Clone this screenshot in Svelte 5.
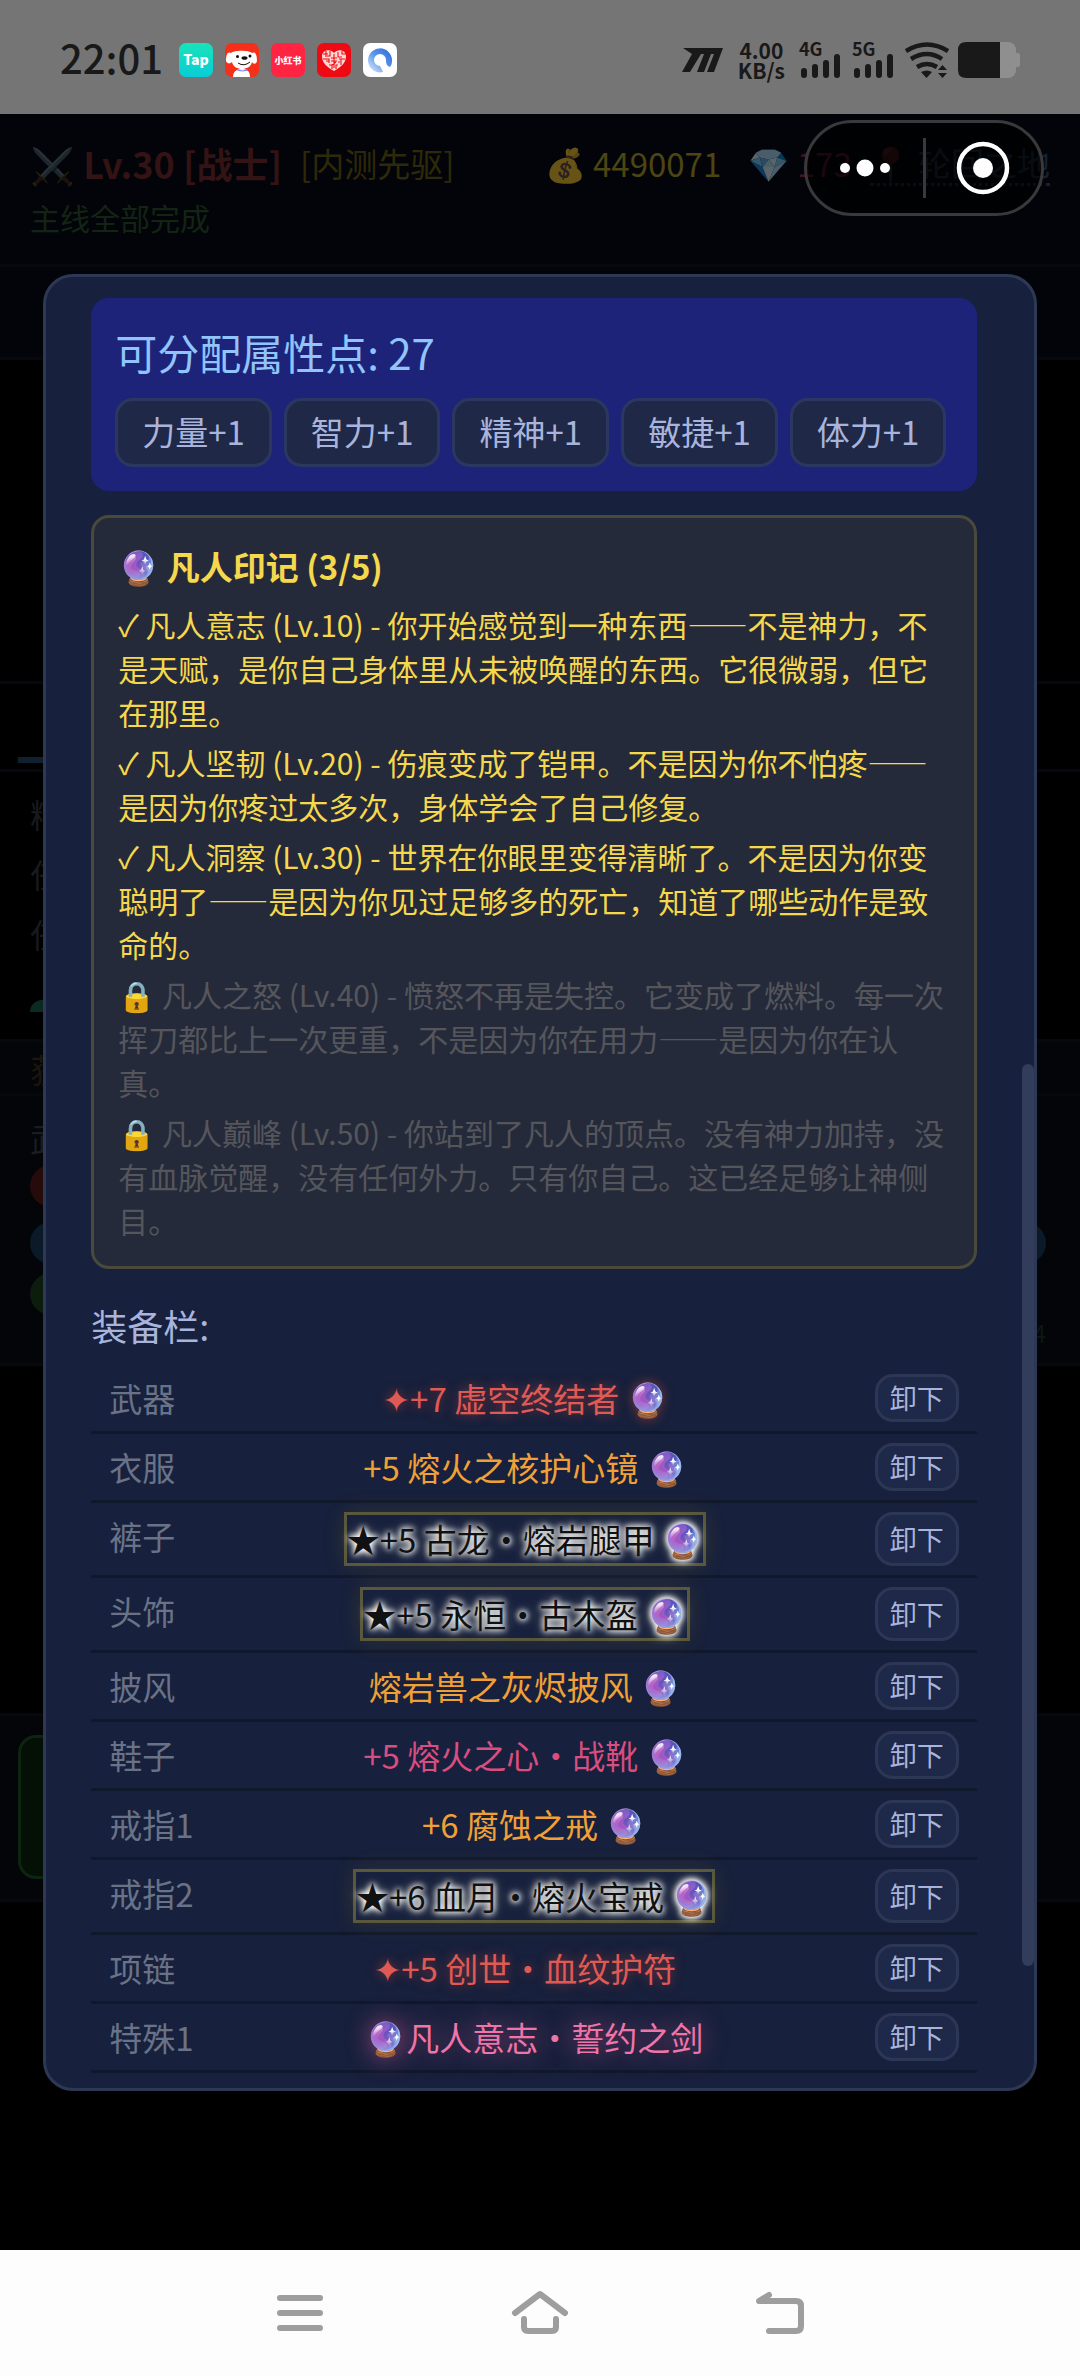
<script>
  const apps = ["tap", "jd", "xhs", "heart", "ring"];

  const attributes = ["力量", "智力", "精神", "敏捷", "体力"];

  const marks = [
    {name: "凡人意志", level: 10, open: true, text: "你开始感觉到一种东西——不是神力，不是天赋，是你自己身体里从未被唤醒的东西。它很微弱，但它在那里。"},
    {name: "凡人坚韧", level: 20, open: true, text: "伤痕变成了铠甲。不是因为你不怕疼——是因为你疼过太多次，身体学会了自己修复。"},
    {name: "凡人洞察", level: 30, open: true, text: "世界在你眼里变得清晰了。不是因为你变聪明了——是因为你见过足够多的死亡，知道了哪些动作是致命的。"},
    {name: "凡人之怒", level: 40, open: false, text: "愤怒不再是失控。它变成了燃料。每一次挥刀都比上一次更重，不是因为你在用力——是因为你在认真。"},
    {name: "凡人巅峰", level: 50, open: false, text: "你站到了凡人的顶点。没有神力加持，没有血脉觉醒，没有任何外力。只有你自己。这已经足够让神侧目。"},
  ];

  const gear = [
    {slot: "武器", item: "✦+7 虚空终结者 🔮", rank: "red"},
    {slot: "衣服", item: "+5 熔火之核护心镜 🔮", rank: "orange"},
    {slot: "裤子", item: "★+5 古龙・熔岩腿甲 🔮", rank: "star"},
    {slot: "头饰", item: "★+5 永恒・古木盔 🔮", rank: "star"},
    {slot: "披风", item: "熔岩兽之灰烬披风 🔮", rank: "orange"},
    {slot: "鞋子", item: "+5 熔火之心・战靴 🔮", rank: "pink"},
    {slot: "戒指1", item: "+6 腐蚀之戒 🔮", rank: "orange"},
    {slot: "戒指2", item: "★+6 血月・熔火宝戒 🔮", rank: "star"},
    {slot: "项链", item: "✦+5 创世・血纹护符", rank: "red"},
    {slot: "特殊1", item: "🔮凡人意志・誓约之剑", rank: "rose"},
  ];

  let points = $state(27);

  function spend() {
    if (points > 0) points -= 1;
  }
</script>

<div class="screen" lang="zh-CN">
  <header class="status">
    <span class="clock">22:01</span>
    {#each apps as app}
      <svg class="app" viewBox="0 0 34 34">
        {#if app === "tap"}
          <defs>
            <linearGradient id="tap" x1="0" y1="0" x2="0" y2="1">
              <stop offset="0" stop-color="#18e3b8" />
              <stop offset="1" stop-color="#08cdd8" />
            </linearGradient>
          </defs>
          <rect width="34" height="34" rx="7" fill="url(#tap)" />
          <text x="17" y="22" text-anchor="middle" font-size="14" font-weight="900" fill="#fff">Tap</text>
        {:else if app === "jd"}
          <rect width="34" height="34" rx="7" fill="#f5301a" />
          <path d="M8 34c0-5 3-8 9-8s8 3 8 8z" fill="#fff" />
          <path d="M6 10c3-3 18-3 21 0 3-2 5 1 5 8-1 4-4 3-5 1-1 5-6 7-10 7s-9-2-10-7c-2 2-5 2-6-1 0-7 2-10 5-8z" fill="#fff" />
          <ellipse cx="19.500" cy="15" rx="3" ry="1.800" fill="#111" />
          <circle cx="12.500" cy="13.500" r="1.500" fill="#111" />
          <circle cx="25" cy="13" r="1.500" fill="#111" />
          <path d="M13 20q6 4 12-1" fill="none" stroke="#111" />
          <path d="M12 27q6 2 11 0" fill="none" stroke="#6a7cff" />
        {:else if app === "xhs"}
          <rect width="34" height="34" rx="7" fill="#ff2442" />
          <text x="17" y="21" text-anchor="middle" font-size="9" font-weight="900" fill="#fff">小红书</text>
        {:else if app === "heart"}
          <rect width="34" height="34" rx="7" fill="#ee0a12" />
          <path d="M17 28C10 24 5 20 5 13c0-6 8-8 12-3 4-5 12-3 12 3 0 7-5 11-12 15z" fill="#ffd9d6" />
          <path d="M6 11h5M9 8v6M13 8v5h-3M6 16h6v4M9 18h3M14 15h6M17 11v14M14 18h6M15 22l4-3M21 9v5h4M25 8v3h4M22 16h6M24 16v6M21 19h2M12 22h3v4M21 22h-2v4" fill="none" stroke="#ee0a12" stroke-width="1.100" />
        {:else}
          <defs>
            <linearGradient id="ring" x1="0" y1="1" x2="1" y2="0">
              <stop offset="0" stop-color="#e8f2ff" />
              <stop offset=".5" stop-color="#5b95ea" />
              <stop offset="1" stop-color="#2c66dc" />
            </linearGradient>
          </defs>
          <rect width="34" height="34" rx="7" fill="#fff" />
          <path d="M20 29A12 12 0 1 1 29 18c0 3-1 5-2 6-3-1-4-3-4-7a6 6 0 1 0-6 6z" fill="url(#ring)" />
        {/if}
      </svg>
    {/each}
    <div class="signals">
      <svg width="42" height="36" viewBox="0 0 42 36">
        <path d="M1 6h40l-9 24h-7l7-18h-3l-7 18h-7l7-18h-3L8 30H0l10-18z" fill="#191919" />
      </svg>
      <span class="speed">4.00<br />KB/s</span>
      {#each ["4G", "5G"] as net}
        <svg class="net" width="44" height="36" viewBox="0 0 44 36">
          <text x="0" y="14" font-size="18" font-weight="700" fill="#191919">{net}</text>
          <path d="M5 29v4M16 25v8M27 21v12M38 15v18" stroke="#191919" stroke-width="6" stroke-linecap="round" />
        </svg>
      {/each}
      <svg width="44" height="36" viewBox="0 0 44 36">
        <g fill="none" stroke="#191919" stroke-width="4.500">
          <path d="M1 9q21-13 42 0" />
          <path d="M6 17q16-10 31 0" />
          <path d="M12 25q10-6 20 0" />
        </g>
        <path d="M16 30q6-3 11 0l-5.500 6zM33 28l4.500-5 4.500 5zM33 31h9l-4.500 5z" fill="#191919" />
      </svg>
      <svg width="62" height="36" viewBox="0 0 62 36">
        <rect width="58" height="36" rx="8" fill="#8f8f8f" />
        <path d="M58 11h2q2 0 2 2v10q0 2-2 2h-2z" fill="#8f8f8f" />
        <path d="M8 0h34v36H8q-8 0-8-8V8q0-8 8-8z" fill="#191919" />
      </svg>
    </div>
  </header>

  <main class="stage">
    <div class="game">
      <section class="hero">
        <div class="row">
          <strong><span class="faint">⚔️</span> Lv.30 [战士]</strong>
          <span class="title">[内测先驱]</span>
          <span class="gold"><span class="dim">💰</span> 4490071</span>
          <span class="gem"><span class="dim">💎</span> <i>173</i></span>
          <a class="place" href="#place"><span class="faint">📍</span> 轮回之地</a>
        </div>
        <p>主线全部完成</p>
      </section>
      <section class="strip"></section>
      <section class="blank"></section>
      <section class="tabs"><span></span></section>
      <section class="log">
        <p>精</p>
        <p>任</p>
        <p>任</p>
        <p class="leaf"></p>
      </section>
      <section class="loot">获</section>
      <section class="party">
        <p>武</p>
        <span class="pill hp"></span>
        <span class="pill mp"></span>
        <span class="pill xp"></span>
        <small>4</small>
      </section>
      <section class="blank low"></section>
      <section class="actions"><span class="go"></span></section>
    </div>

    <div class="overlay">
      <div class="modal">
        <section class="points">
          <h2>可分配属性点: {points}</h2>
          <div class="adds">
            {#each attributes as name}
              <button onclick={spend}>{name}+1</button>
            {/each}
          </div>
        </section>

        <section class="marks">
          <h3>🔮 凡人印记 (3/5)</h3>
          {#each marks as mark}
            <p class:locked={!mark.open}>{mark.open ? "✓" : "🔒"} {mark.name} (Lv.{mark.level}) - {mark.text}</p>
          {/each}
        </section>

        <h4>装备栏:</h4>
        <ul>
          {#each gear as piece}
            <li>
              <span class="slot">{piece.slot}</span>
              <span class="item {piece.rank}">{piece.item}</span>
              <button>卸下</button>
            </li>
          {/each}
        </ul>
        <span class="thumb"></span>
      </div>
    </div>

    <div class="capsule">
      <button aria-label="更多">
        <svg width="50" height="60" viewBox="0 0 50 60" fill="#fff">
          <circle cx="5" cy="30" r="5" />
          <circle cx="25" cy="30" r="8.500" />
          <circle cx="45" cy="30" r="5" />
        </svg>
      </button>
      <button aria-label="关闭">
        <svg width="54" height="60" viewBox="0 0 54 60">
          <circle cx="27" cy="30" r="24" fill="none" stroke="#fff" stroke-width="4.500" />
          <circle cx="27" cy="30" r="10" fill="#fff" />
        </svg>
      </button>
    </div>
  </main>

  <nav>
    <button aria-label="菜单">
      <svg width="60" height="60" viewBox="0 0 60 60">
        <path d="M10 15h40M10 30h40M10 45h40" />
      </svg>
    </button>
    <button aria-label="主页">
      <svg width="60" height="60" viewBox="0 0 60 60">
        <path d="M5 30L30 11l25 19M14 36v8q0 4 4 4h24q4 0 4-4v-8" />
      </svg>
    </button>
    <button aria-label="返回">
      <svg width="60" height="60" viewBox="0 0 60 60">
        <path d="M19 48h27q5 0 5-5V23q0-5-5-5H9l10-6" />
      </svg>
    </button>
  </nav>
</div>

<style>
:global(body) {
  background: #000;
}
.screen {
  display: flex;
  flex-direction: column;
  min-height: 100vh;
  font-family: "Noto Sans CJK SC", "DejaVu Sans", sans-serif;
}
h2, h3, h4, p, ul {
  margin: 0;
  padding: 0;
}
button {
  font-family: inherit;
  padding: 0;
}
.status {
  display: flex;
  align-items: center;
  gap: 12px;
  height: 114px;
  padding: 6px 60px 0;
  box-sizing: border-box;
  background: #757575;
  color: #191919;
}
.clock {
  font-size: 40px;
  font-weight: 500;
  line-height: 48px;
  margin: 0 4px 6px 0;
}
.app {
  width: 34px;
  height: 34px;
}
.signals {
  display: flex;
  align-items: center;
  gap: 9px;
  margin-left: auto;
}
.net {
  overflow: visible;
}
.speed {
  font-size: 21px;
  font-weight: 600;
  line-height: 20px;
  text-align: center;
  margin: 0 5px;
}
.stage {
  position: relative;
  flex: 1;
}
.game section {
  border-bottom: 3px solid #06080d;
  box-sizing: border-box;
}
.hero {
  height: 153px;
  padding: 22px 30px 0;
  background: #020409;
}
.row {
  display: flex;
  align-items: center;
  gap: 18px;
  font-size: 33px;
  line-height: 54px;
  white-space: nowrap;
}
.row strong {
  font-size: 36px;
  color: #331313;
}
.faint {
  opacity: .2;
}
.dim {
  opacity: .4;
}
.title {
  color: #2e2908;
}
.gold {
  margin-left: auto;
  color: #4d4512;
}
.gem {
  margin-left: 9px;
}
.gem i {
  font-style: normal;
  color: #45131f;
}
.place {
  color: #16222f;
  text-decoration: none;
  border-bottom: 3px dotted #16222f;
  line-height: 42px;
}
.hero p {
  font-size: 30px;
  line-height: 54px;
  color: #142414;
}
.strip {
  height: 93px;
  background: #020409;
}
.blank {
  height: 324px;
}
.tabs {
  height: 88px;
  padding: 73px 18px 0;
}
.tabs span {
  display: block;
  height: 6px;
  width: 30%;
  background: #10202e;
}
.log {
  height: 270px;
  padding: 12px 30px;
  font-size: 33px;
  line-height: 60px;
  color: #17191c;
}
.leaf {
  width: 24px;
  height: 12px;
  margin-top: 36px;
  border-radius: 12px 0;
  background: #0b2a22;
}
.loot {
  height: 54px;
  padding: 0 30px;
  font-size: 33px;
  line-height: 54px;
  color: #1b160c;
  background: #030509;
}
.party {
  height: 270px;
  padding: 15px 34px 0 30px;
  color: #1a1c20;
  background: #030509;
}
.party p {
  font-size: 33px;
  line-height: 54px;
}
.pill {
  display: block;
  height: 42px;
  margin-bottom: 15px;
  border-radius: 21px;
}
.hp {
  width: 60%;
  background: #260b0b;
}
.mp {
  background: #0b1a28;
  margin-bottom: 9px;
}
.xp {
  width: 50%;
  background: #0c1d0d;
  margin-bottom: 0;
}
.party small {
  display: block;
  font-size: 24px;
  text-align: right;
  color: #0f1510;
}
.low {
  height: 350px;
}
.actions {
  height: 186px;
  padding: 19px 18px;
  background: #030508;
}
.go {
  display: block;
  box-sizing: border-box;
  width: 40%;
  height: 144px;
  border: 3px solid #0d2410;
  border-radius: 18px;
  background: #041006;
}
.overlay {
  position: absolute;
  inset: 0;
  display: flex;
  align-items: center;
  justify-content: center;
}
.modal {
  position: relative;
  width: 92%;
  box-sizing: border-box;
  padding: 21px 57px 15px 45px;
  border: 3px solid #2d3855;
  border-radius: 30px;
  background: #17203c;
}
.points {
  padding: 24px;
  border-radius: 18px;
  background: #1e237a;
}
.points h2 {
  font-size: 42px;
  font-weight: 400;
  line-height: 60px;
  margin-bottom: 16px;
  color: #90c4fb;
}
.adds {
  display: flex;
  flex-wrap: wrap;
  gap: 12px;
}
.adds button {
  height: 69px;
  padding: 0 24px 2px;
  font-size: 33px;
  color: #a9b4dc;
  background: #1f2846;
  border: 3px solid #2c3760;
  border-radius: 18px;
}
.marks {
  margin-top: 24px;
  padding: 24px 24px 21px;
  border: 3px solid #4a4a3b;
  border-radius: 18px;
  background: #252a3a;
  color: #f6d84c;
}
.marks h3 {
  font-size: 33px;
  font-weight: 700;
  line-height: 48px;
  margin-bottom: 9px;
}
.marks p {
  padding: 3px 0;
  font-size: 30px;
  line-height: 44px;
}
.marks .locked {
  color: #55565c;
}
h4 {
  margin: 28px 0 12px;
  font-size: 36px;
  font-weight: 400;
  line-height: 56px;
  color: #a9b4dc;
}
ul {
  list-style: none;
}
li {
  display: flex;
  justify-content: space-between;
  padding: 9px 18px;
  border-bottom: 3px solid #10182c;
  font-size: 33px;
  line-height: 48px;
}
.slot {
  color: #697287;
}
li button {
  padding: 0 12px;
  font-size: 27px;
  color: #a9b4dc;
  background: #1e2848;
  border: 3px solid #2c3655;
  border-radius: 18px;
}
.red {
  color: #e05a55;
  text-shadow: 0 0 12px rgba(232, 80, 60, .5);
}
.orange {
  color: #f0a036;
}
.pink {
  color: #d94d80;
}
.rose {
  color: #ef74a8;
  text-shadow: 0 0 24px rgba(239, 96, 160, .6);
}
.star {
  border: 3px solid #5a583a;
  color: #111;
  text-shadow: 0 0 6px #fff, 0 0 6px #fff, 0 0 12px #dcdcc8;
  box-shadow: 0 0 24px rgba(255, 215, 0, .1);
}
.thumb {
  position: absolute;
  right: 0;
  top: 787px;
  bottom: 122px;
  width: 12px;
  border-radius: 6px;
  background: #323d5c;
}
.capsule {
  position: absolute;
  top: 6px;
  right: 36px;
  display: flex;
  align-items: center;
  width: 240px;
  height: 96px;
  box-sizing: border-box;
  border: 3px solid #39393b;
  border-radius: 48px;
  background: rgba(0, 0, 0, .6);
}
.capsule button {
  flex: 1;
  height: 60px;
  border: 0;
  background: none;
}
.capsule button + button {
  border-left: 3px solid #39393b;
}
nav {
  display: flex;
  align-items: center;
  justify-content: center;
  gap: 180px;
  height: 126px;
  background: #fdfdfd;
}
nav button {
  height: 60px;
  border: 0;
  background: none;
}
nav path {
  fill: none;
  stroke: #9e9e9e;
  stroke-width: 6;
  stroke-linecap: round;
  stroke-linejoin: round;
}
</style>
